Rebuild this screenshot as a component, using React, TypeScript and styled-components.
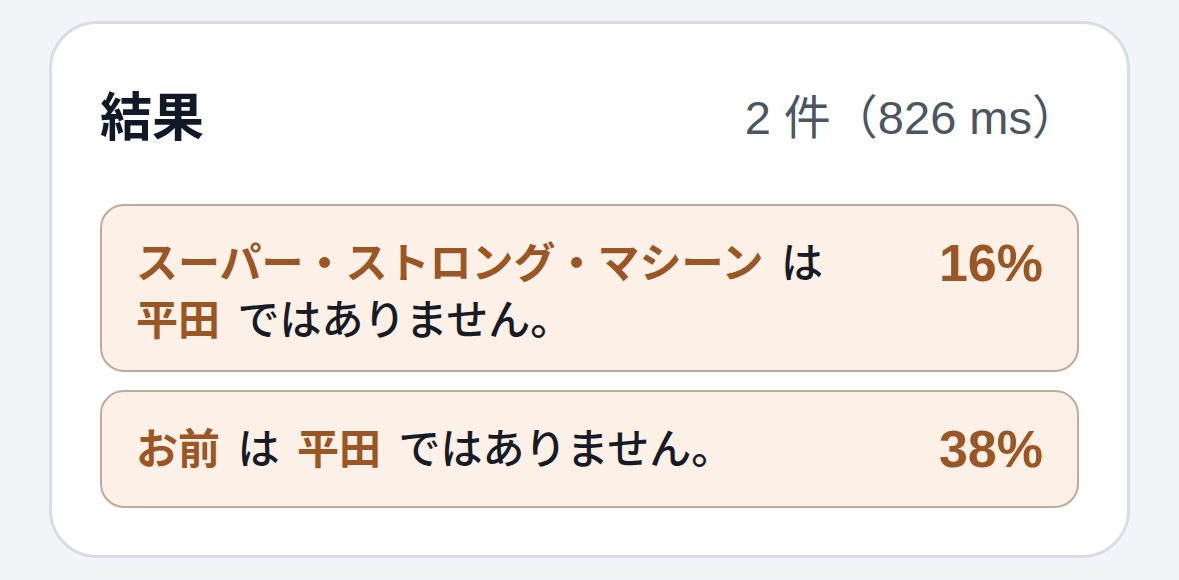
import { FC } from 'react'
import styled, { createGlobalStyle } from 'styled-components'

const GlobalStyle = createGlobalStyle`
  html, body {
    margin: 0;
    padding: 0;
    background: #f3f4f8;
  }
  body {
    font-family: "Liberation Sans", "Noto Sans CJK JP", sans-serif;
    color: #111827;
  }
`

interface Part {
  text: string
  hit?: boolean
}

interface Result {
  id: number
  parts: Part[]
  score: number
}

const results: Result[] = [
  {
    id: 1,
    parts: [
      { text: 'スーパー・ストロング・マシーン', hit: true },
      { text: ' は ' },
      { text: '平田', hit: true },
      { text: ' ではありません。' },
    ],
    score: 16,
  },
  {
    id: 2,
    parts: [
      { text: 'お前', hit: true },
      { text: ' は ' },
      { text: '平田', hit: true },
      { text: ' ではありません。' },
    ],
    score: 38,
  },
]

const App: FC = () => {
  return (
    <>
      <GlobalStyle />
      <Page>
        <Card>
          <Header>
            <Title>結果</Title>
            <Meta>2 件（826 ms）</Meta>
          </Header>
          <List>
            {results.map((r) => (
              <Row key={r.id}>
                <Sentence>
                  {r.parts.map((p, i) =>
                    p.hit ? <Hit key={i}>{p.text}</Hit> : <span key={i}>{p.text}</span>
                  )}
                </Sentence>
                <Score>{r.score}%</Score>
              </Row>
            ))}
          </List>
        </Card>
      </Page>
    </>
  )
}

export default App

const Page = styled.div`
  padding: 21px 49px;
`

const Card = styled.section`
  background: #ffffff;
  border: 3px solid #d7dce5;
  border-radius: 48px;
  padding: 47px 48px;
`

const Header = styled.header`
  display: flex;
  align-items: center;
  justify-content: space-between;
  height: 84px;
  margin-bottom: 49px;
`

const Title = styled.h2`
  margin: 0;
  font-family: "Noto Sans CJK JP", sans-serif;
  font-size: 52px;
  font-weight: 700;
  color: #111827;
`

const Meta = styled.span`
  font-size: 47px;
  color: #4b5563;
`

const List = styled.div`
  display: flex;
  flex-direction: column;
  gap: 18px;
`

const Row = styled.div`
  display: flex;
  align-items: flex-start;
  justify-content: space-between;
  gap: 80px;
  background: #fdf0e6;
  border: 2.5px solid #c0aa9b;
  border-radius: 24px;
  padding: 25px 34px;
`

const Sentence = styled.p`
  margin: 0;
  font-family: "Noto Sans CJK JP", sans-serif;
  font-size: 42px;
  font-weight: 500;
  line-height: 57px;
  word-spacing: 8px;
  color: #161b26;
`

const Hit = styled.span`
  color: #9a5624;
  font-weight: 700;
`

const Score = styled.span`
  flex-shrink: 0;
  font-family: "Liberation Sans", "Noto Sans CJK JP", sans-serif;
  font-size: 52px;
  font-weight: 700;
  line-height: 64px;
  color: #9a5624;
`
